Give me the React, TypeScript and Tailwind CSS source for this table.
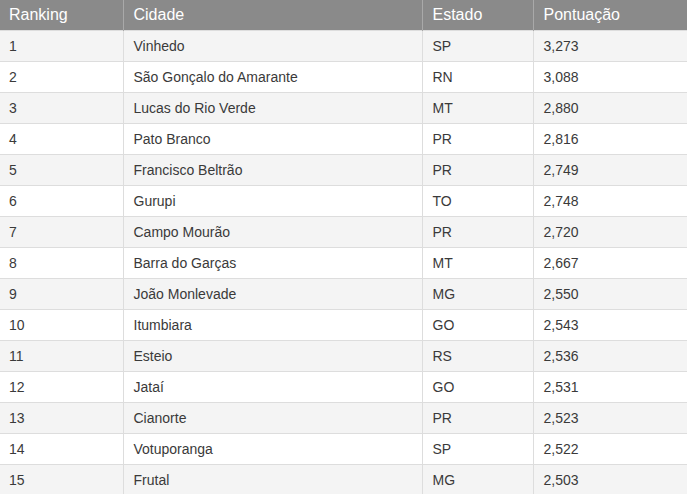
import React from 'react';

const rows: [number, string, string, string][] = [
  [1, 'Vinhedo', 'SP', '3,273'],
  [2, 'São Gonçalo do Amarante', 'RN', '3,088'],
  [3, 'Lucas do Rio Verde', 'MT', '2,880'],
  [4, 'Pato Branco', 'PR', '2,816'],
  [5, 'Francisco Beltrão', 'PR', '2,749'],
  [6, 'Gurupi', 'TO', '2,748'],
  [7, 'Campo Mourão', 'PR', '2,720'],
  [8, 'Barra do Garças', 'MT', '2,667'],
  [9, 'João Monlevade', 'MG', '2,550'],
  [10, 'Itumbiara', 'GO', '2,543'],
  [11, 'Esteio', 'RS', '2,536'],
  [12, 'Jataí', 'GO', '2,531'],
  [13, 'Cianorte', 'PR', '2,523'],
  [14, 'Votuporanga', 'SP', '2,522'],
  [15, 'Frutal', 'MG', '2,503'],
];

export default function App() {
  return (
    <div className="w-[687px] bg-white font-['Liberation_Sans',Arial,sans-serif]">
      <table className="w-full border-collapse table-fixed">
        <colgroup>
          <col className="w-[123px]" />
          <col className="w-[299px]" />
          <col className="w-[111px]" />
          <col />
        </colgroup>
        <thead>
          <tr className="h-[30px] bg-[#8a8a8a] text-white text-[16px] text-left">
            <th className="font-normal px-[9px] py-0">Ranking</th>
            <th className="font-normal px-[10px] py-0 border-l border-[#a9a9a9]">Cidade</th>
            <th className="font-normal px-[10px] py-0 border-l border-[#a9a9a9]">Estado</th>
            <th className="font-normal px-[10px] py-0 border-l border-[#a9a9a9]">Pontuação</th>
          </tr>
        </thead>
        <tbody className="text-[14px] text-[#3a3a3a]">
          {rows.map(([rank, city, state, score]) => (
            <tr
              key={rank}
              className={`h-[31px] border-t border-[#dddddd] ${rank % 2 === 1 ? 'bg-[#f4f4f4]' : 'bg-white'}`}
            >
              <td className="px-[9px] pt-[2px] pb-0">{rank}</td>
              <td className="px-[10px] pt-[2px] pb-0 border-l border-[#dddddd]">{city}</td>
              <td className="px-[10px] pt-[2px] pb-0 border-l border-[#dddddd]">{state}</td>
              <td className="px-[10px] pt-[2px] pb-0 border-l border-[#dddddd]">{score}</td>
            </tr>
          ))}
        </tbody>
      </table>
    </div>
  );
}
